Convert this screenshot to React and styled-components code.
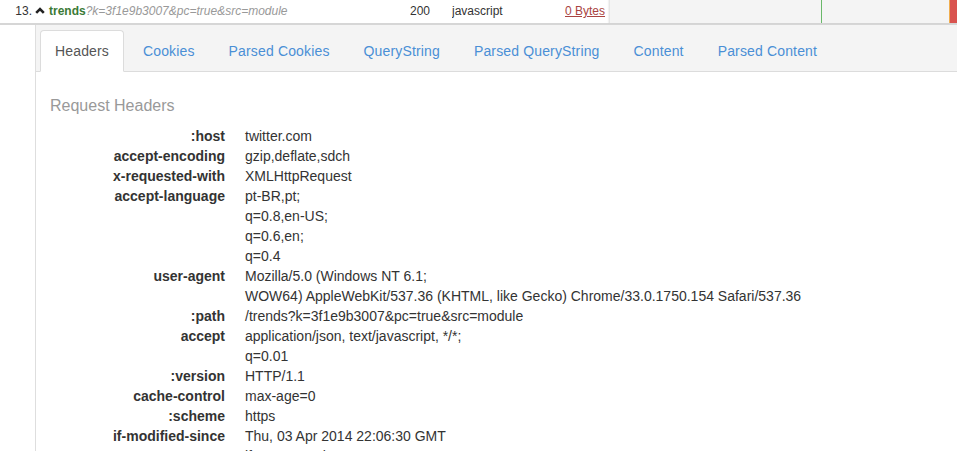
import React from 'react'
import styled, { createGlobalStyle } from 'styled-components'

const GlobalStyle = createGlobalStyle`
  html, body {
    margin: 0;
    padding: 0;
    background: #fff;
    overflow: hidden;
  }
  body {
    font-family: "Liberation Sans", Arial, sans-serif;
    color: #333;
  }
`

const Page = styled.div`
  width: 957px;
  height: 451px;
  overflow: hidden;
`

const EntryRow = styled.div`
  display: grid;
  grid-template-columns: 35px 375px 42px 113px 44px 1fr;
  height: 23px;
  border-bottom: 2px solid #d6d6d6;
  font-size: 12px;
  line-height: 23px;
`

const Cell = styled.div`
  white-space: nowrap;
  overflow: hidden;
  text-align: ${p => p.$align || 'left'};
  padding-right: ${p => p.$pr || 0}px;
`

const Caret = styled.svg`
  width: 10px;
  height: 7px;
  margin-right: 4px;
  vertical-align: 1px;
`

const Name = styled.span`
  color: #3b7a36;
  font-weight: bold;
`

const Query = styled.span`
  color: #999;
  font-style: italic;
`

const Size = styled.a`
  color: #a94442;
  text-decoration: underline;
`

const Timeline = styled.div`
  position: relative;
  background: #f4f4f4;
  border-left: 1px solid #e6e6e6;
  box-shadow: -1px 0 1px rgba(0, 0, 0, 0.05);
`

const Mark = styled.div`
  position: absolute;
  top: 0;
  bottom: 0;
  left: ${p => p.$left}px;
  width: ${p => p.$width}px;
  background: ${p => p.$color};
  border-left: ${p => (p.$edge ? `1px solid ${p.$edge}` : 'none')};
`

const Detail = styled.div`
  margin-left: 35px;
  border-left: 1px solid #dedede;
`

const TabBar = styled.ul`
  display: flex;
  list-style: none;
  margin: 0;
  padding: 5px 0 0 4px;
  background: #f4f4f4;
  border-bottom: 1px solid #dcdcdc;
`

const Tab = styled.li`
  margin-right: 4px;
  margin-bottom: -1px;
  padding: 10px 14px;
  line-height: 20px;
  font-size: 14px;
  letter-spacing: 0.15px;
  border: 1px solid ${p => (p.$active ? '#dcdcdc' : 'transparent')};
  border-bottom-color: ${p => (p.$active ? '#fff' : 'transparent')};
  border-radius: 4px 4px 0 0;
  background: ${p => (p.$active ? '#fff' : 'transparent')};
  color: ${p => (p.$active ? '#555' : '#4a8fd6')};
`

const Body = styled.div`
  padding: 25px 14px 0;
`

const SectionTitle = styled.h3`
  margin: 0 0 11px;
  font-size: 16px;
  line-height: 18px;
  font-weight: normal;
  color: #999;
`

const HeaderTable = styled.div`
  display: grid;
  grid-template-columns: 175px 1fr;
  column-gap: 20px;
  font-size: 14px;
  line-height: 20px;
`

const Key = styled.div`
  text-align: right;
  font-weight: bold;
  color: #333;
`

const Value = styled.div`
  color: #333;
  white-space: nowrap;
`

const tabs = [
  'Headers',
  'Cookies',
  'Parsed Cookies',
  'QueryString',
  'Parsed QueryString',
  'Content',
  'Parsed Content',
]

const headers = [
  [':host', ['twitter.com']],
  ['accept-encoding', ['gzip,deflate,sdch']],
  ['x-requested-with', ['XMLHttpRequest']],
  ['accept-language', ['pt-BR,pt;', 'q=0.8,en-US;', 'q=0.6,en;', 'q=0.4']],
  ['user-agent', ['Mozilla/5.0 (Windows NT 6.1;', 'WOW64) AppleWebKit/537.36 (KHTML, like Gecko) Chrome/33.0.1750.154 Safari/537.36']],
  [':path', ['/trends?k=3f1e9b3007&pc=true&src=module']],
  ['accept', ['application/json, text/javascript, */*;', 'q=0.01']],
  [':version', ['HTTP/1.1']],
  ['cache-control', ['max-age=0']],
  [':scheme', ['https']],
  ['if-modified-since', ['Thu, 03 Apr 2014 22:06:30 GMT']],
  ['', ['if-none-match']],
]

const App = () => {
  return (
    <Page>
      <GlobalStyle />
      <EntryRow>
        <Cell $align="right" $pr={3}>13.</Cell>
        <Cell>
          <Caret viewBox="0 0 10 7">
            <path d="M1.2 5.8 L5 2 L8.8 5.8" fill="none" stroke="#222" strokeWidth="2.6" />
          </Caret>
          <Name>trends</Name>
          <Query>?k=3f1e9b3007&amp;pc=true&amp;src=module</Query>
        </Cell>
        <Cell>200</Cell>
        <Cell>javascript</Cell>
        <Cell>
          <Size>0 Bytes</Size>
        </Cell>
        <Timeline>
          <Mark $left={211} $width={1} $color="#6ab86a" />
          <Mark $left={339} $width={8} $color="#d9534f" $edge="#f0ad4e" />
        </Timeline>
      </EntryRow>
      <Detail>
        <TabBar>
          {tabs.map((t, i) => (
            <Tab key={t} $active={i === 0}>{t}</Tab>
          ))}
        </TabBar>
        <Body>
          <SectionTitle>Request Headers</SectionTitle>
          <HeaderTable>
            {headers.map(([k, lines]) => (
              <React.Fragment key={k + lines[0]}>
                <Key>{k}</Key>
                <Value>
                  {lines.map(l => (
                    <div key={l}>{l}</div>
                  ))}
                </Value>
              </React.Fragment>
            ))}
          </HeaderTable>
        </Body>
      </Detail>
    </Page>
  )
}

export default App
